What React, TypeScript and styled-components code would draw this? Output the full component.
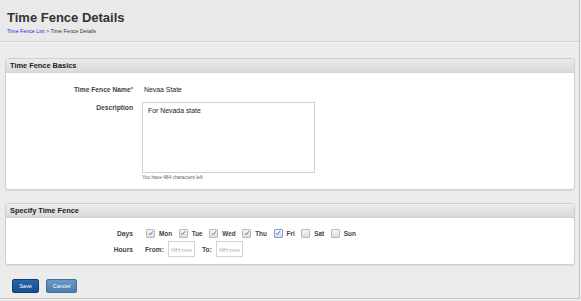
import React from 'react';
import styled, { createGlobalStyle } from 'styled-components';

const GlobalStyle = createGlobalStyle`
  html, body {
    margin: 0;
    padding: 0;
    background: #ebebeb;
    font-family: 'Liberation Sans', Arial, sans-serif;
  }
`;

const Page = styled.div`
  width: 579px;
  height: 298px;
  background: #ececec;
  border-right: 1px solid #c4c4c4;
  border-bottom: 1px solid #c4c4c4;
  display: flex;
  flex-direction: column;
`;

const Header = styled.div`
  height: 42px;
  padding: 10px 0 0 7px;
  box-sizing: border-box;
  border-bottom: 1px solid #d2d2d2;
  box-shadow: 0 1px 0 #f6f6f6;
  background: #e9e9e9;
`;

const Title = styled.h1`
  margin: 0;
  font-size: 13px;
  line-height: 15px;
  font-weight: bold;
  color: #333;
`;

const Crumbs = styled.div`
  margin-top: 3px;
  font-size: 5.3px;
  line-height: 7px;
  color: #333;

  a {
    color: #2a2ad8;
    text-decoration: none;
  }
`;

const Content = styled.div`
  padding: 16px 4px 0 5px;
  display: flex;
  flex-direction: column;
  gap: 13px;
`;

const Panel = styled.section`
  border: 1px solid #cfcfcf;
  border-radius: 3px;
  background: #fff;
  overflow: hidden;
  box-shadow: 0 1px 1px rgba(0, 0, 0, 0.08);
`;

const PanelHeader = styled.div`
  height: 13px;
  line-height: 13px;
  padding-left: 4px;
  font-size: 7.4px;
  font-weight: bold;
  color: #222;
  background: linear-gradient(#ececec, #d9d9d9);
  border-bottom: 1px solid #d2d2d2;
`;

const PanelBody = styled.div<{ $pad: string }>`
  padding: ${(p) => p.$pad};
  display: flex;
  flex-direction: column;
`;

const Row = styled.div<{ $gap?: number; $align?: string; $min?: number }>`
  display: grid;
  grid-template-columns: 127px 1fr;
  column-gap: 9px;
  align-items: ${(p) => p.$align || 'center'};
  margin-top: ${(p) => p.$gap || 0}px;
  min-height: ${(p) => p.$min || 0}px;
`;

const Label = styled.div`
  text-align: right;
  font-size: 6.7px;
  font-weight: bold;
  color: #444;
  line-height: 9px;

  em {
    color: #d22;
    font-style: normal;
    font-size: 6px;
    vertical-align: top;
  }
`;

const Value = styled.div`
  font-size: 6.9px;
  color: #222;
  padding-left: 2px;
`;

const TextArea = styled.div`
  width: 173px;
  height: 71px;
  box-sizing: border-box;
  border: 1px solid #cfcfcf;
  padding: 4px 5px;
  font-size: 6.9px;
  color: #222;
`;

const Hint = styled.div`
  margin-top: 2px;
  font-size: 4.8px;
  color: #666;
`;

const Inline = styled.div<{ $indent: number }>`
  display: flex;
  align-items: center;
  padding-left: ${(p) => p.$indent}px;
`;

const DayItem = styled.label`
  display: flex;
  align-items: center;
  margin-right: 6.6px;
  font-size: 6.4px;
  font-weight: bold;
  color: #444;
`;

const Box = styled.span<{ $focus?: boolean }>`
  width: 7px;
  height: 7px;
  border: 1px solid ${(p) => (p.$focus ? '#7a9ed8' : '#b9b9b9')};
  border-radius: 1px;
  background: linear-gradient(#f4f4f4, #dedede);
  margin-right: 4px;
  display: flex;
  align-items: center;
  justify-content: center;
`;

const FieldLabel = styled.span`
  font-size: 6.7px;
  font-weight: bold;
  color: #444;
  margin-right: 4px;
`;

const TimeInput = styled.div`
  width: 27px;
  height: 16px;
  box-sizing: border-box;
  border: 1px solid #d3d3d3;
  font-size: 6.2px;
  color: #aaa;
  display: flex;
  align-items: center;
  justify-content: center;
  margin-right: 7px;
`;

const Actions = styled.div`
  display: flex;
  gap: 7px;
  padding: 14px 0 0 12px;
`;

const Button = styled.button<{ $primary?: boolean }>`
  height: 14px;
  width: ${(p) => (p.$primary ? 27 : 31)}px;
  padding: 0;
  border: 1px solid ${(p) => (p.$primary ? '#0d3d73' : '#40709f')};
  border-radius: 2px;
  background: ${(p) =>
    p.$primary
      ? 'linear-gradient(#2567ad, #164f8d)'
      : 'linear-gradient(#6b98c4, #4f7fb0)'};
  color: #fff;
  font-family: inherit;
  font-size: 5.6px;
  cursor: pointer;
`;

const Check = () => (
  <svg width="6" height="6" viewBox="0 0 6 6">
    <path d="M1 3.2 L2.4 4.6 L5 1.2" fill="none" stroke="#3a6fc4" strokeWidth="0.9" />
  </svg>
);

const days = [
  { name: 'Mon', on: true },
  { name: 'Tue', on: true },
  { name: 'Wed', on: true },
  { name: 'Thu', on: true },
  { name: 'Fri', on: true, focus: true },
  { name: 'Sat', on: false },
  { name: 'Sun', on: false },
];

export default function App() {
  return (
    <>
      <GlobalStyle />
      <Page>
        <Header>
          <Title>Time Fence Details</Title>
          <Crumbs>
            <a href="#">Time Fence List</a> &gt; Time Fence Details
          </Crumbs>
        </Header>
        <Content>
          <Panel>
            <PanelHeader>Time Fence Basics</PanelHeader>
            <PanelBody $pad="12px 0 9px 0">
              <Row>
                <Label>
                  Time Fence Name<em>*</em>
                </Label>
                <Value>Nevaa State</Value>
              </Row>
              <Row $gap={8} $align="start">
                <Label style={{ marginTop: 1 }}>Description</Label>
                <div>
                  <TextArea>For Nevada state</TextArea>
                  <Hint>You have 484 characters left</Hint>
                </div>
              </Row>
            </PanelBody>
          </Panel>
          <Panel>
            <PanelHeader>Specify Time Fence</PanelHeader>
            <PanelBody $pad="7px 0 7px 0">
              <Row $min={16}>
                <Label>Days</Label>
                <Inline $indent={4}>
                  {days.map((d) => (
                    <DayItem key={d.name}>
                      <Box $focus={d.focus}>{d.on && <Check />}</Box>
                      {d.name}
                    </DayItem>
                  ))}
                </Inline>
              </Row>
              <Row $min={16}>
                <Label>Hours</Label>
                <Inline $indent={3}>
                  <FieldLabel>From:</FieldLabel>
                  <TimeInput>HH:mm</TimeInput>
                  <FieldLabel>To:</FieldLabel>
                  <TimeInput>HH:mm</TimeInput>
                </Inline>
              </Row>
            </PanelBody>
          </Panel>
        </Content>
        <Actions>
          <Button $primary>Save</Button>
          <Button>Cancel</Button>
        </Actions>
      </Page>
    </>
  );
}
